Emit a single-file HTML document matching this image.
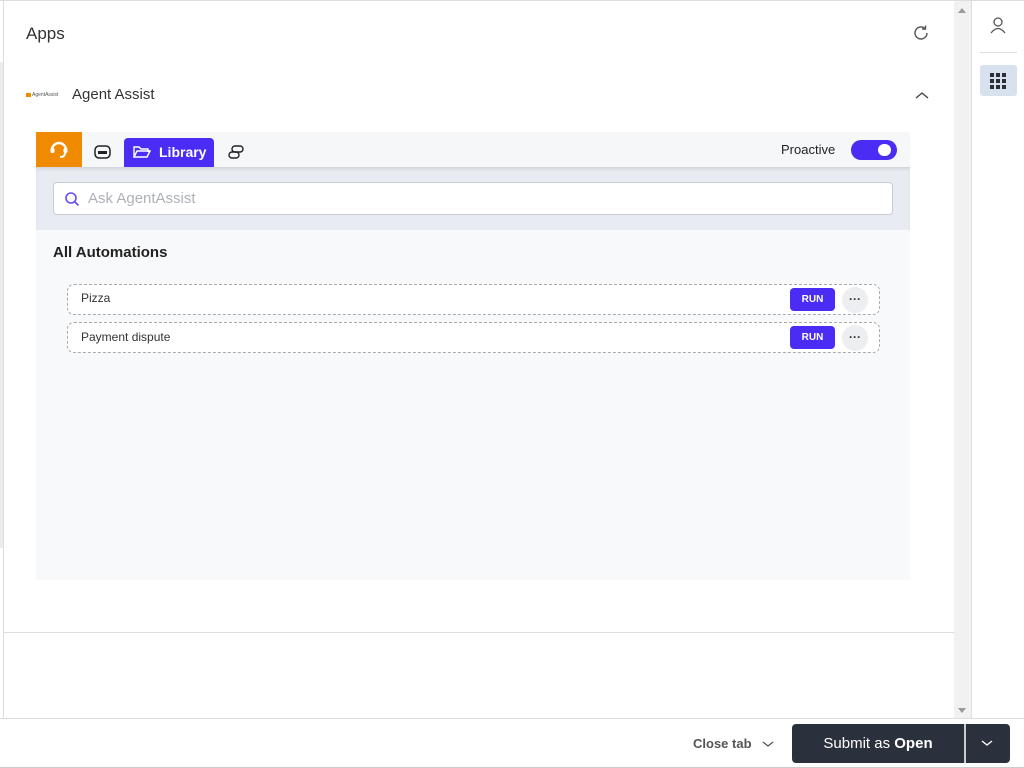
<!DOCTYPE html>
<html><head><style>
*{box-sizing:border-box;margin:0;padding:0}
body{width:1024px;height:768px;position:relative;background:#fff;font-family:"Liberation Sans",sans-serif;overflow:hidden;color:#2b2f36}
.a{position:absolute}
</style></head><body>
<div class="a" style="left:0;top:0;width:1024px;height:1px;background:#ddd"></div>
<div class="a" style="left:0;top:62px;width:3px;height:486px;background:#ececec"></div>
<div class="a" style="left:3px;top:1px;width:1px;height:717px;background:#ddd"></div>
<div class="a" style="left:26px;top:24px;font-size:17px;color:#333">Apps</div>
<svg class="a" style="left:912px;top:24px" width="18" height="18" viewBox="0 0 18 18"><path d="M15 9a6 6 0 1 1-2-4.5" fill="none" stroke="#555" stroke-width="1.4"/><path d="M13.5 1.5v3.5h-3.5" fill="none" stroke="#555" stroke-width="1.4"/></svg>
<div class="a" style="left:26px;top:93px;width:5px;height:4px;background:#f08a00"></div>
<div class="a" style="left:32px;top:92px;font-size:5px;color:#555">AgentAssist</div>
<div class="a" style="left:72px;top:86px;font-size:15px;color:#333">Agent Assist</div>
<svg class="a" style="left:914px;top:89px" width="16" height="12"><path d="M2 9l6-5 6 5" fill="none" stroke="#444" stroke-width="1.4"/></svg>
<div class="a" style="left:36px;top:132px;width:874px;height:448px;background:#f8f9fb"></div>
<div class="a" style="left:36px;top:132px;width:874px;height:35px;background:#f6f7f9"></div>
<div class="a" style="left:36px;top:132px;width:46px;height:35px;background:#f08a00"></div>
<svg class="a" style="left:48px;top:139px" width="22" height="22" viewBox="0 0 22 22"><path d="M4 11a7 7 0 0 1 14 0" fill="none" stroke="#fff" stroke-width="2.4"/><rect x="2.5" y="9" width="4" height="5" rx="1.5" fill="#fff"/><rect x="15.5" y="9" width="4" height="5" rx="1.5" fill="#fff"/><path d="M17 14q0 4-5 4" fill="none" stroke="#fff" stroke-width="2"/></svg>
<svg class="a" style="left:94px;top:145px" width="17" height="14" viewBox="0 0 17 14"><rect x="1" y="1" width="15" height="12" rx="4" fill="none" stroke="#222" stroke-width="1.5"/><rect x="4" y="6" width="9" height="3" fill="#222"/></svg>
<div class="a" style="left:124px;top:138px;width:90px;height:29px;background:#4b2cf5;border-radius:4px 4px 0 0;color:#fff;font-size:14px;font-weight:bold;padding:6px 0 0 35px">Library</div>
<svg class="a" style="left:133px;top:145px" width="18" height="14" viewBox="0 0 18 14"><path d="M1 12V2h5l2 2h7v3M1 12l3-6h13l-3 6z" fill="none" stroke="#fff" stroke-width="1.4"/></svg>
<svg class="a" style="left:228px;top:145px" width="17" height="14" viewBox="0 0 17 14"><rect x="4" y="1" width="11" height="6" rx="3" fill="none" stroke="#222" stroke-width="1.4"/><rect x="1" y="7" width="10" height="6" rx="3" fill="none" stroke="#222" stroke-width="1.4"/></svg>
<div class="a" style="left:781px;top:142px;font-size:13px;color:#222">Proactive</div>
<div class="a" style="left:851px;top:140px;width:46px;height:20px;border-radius:10px;background:#4b2cf5"></div>
<div class="a" style="left:878px;top:144px;width:13px;height:12px;border-radius:6px;background:#fff"></div>
<div class="a" style="left:36px;top:167px;width:874px;height:63px;background:#e8ecf2;box-shadow:inset 0 3px 4px -2px rgba(0,0,0,.15)"></div>
<div class="a" style="left:53px;top:182px;width:840px;height:33px;background:#fff;border:1px solid #c9ccd2;border-radius:4px"></div>
<svg class="a" style="left:64px;top:191px" width="16" height="16"><circle cx="7" cy="7" r="5" fill="none" stroke="#6a4cf5" stroke-width="1.6"/><path d="M11 11l3.5 3.5" stroke="#6a4cf5" stroke-width="1.6"/></svg>
<div class="a" style="left:88px;top:190px;font-size:15px;color:#aeb2b8">Ask AgentAssist</div>
<div class="a" style="left:53px;top:244px;font-size:15px;font-weight:bold;color:#222">All Automations</div>
<div class="a" style="left:67px;top:284px;width:813px;height:31px;background:#fff;border:1px dashed #aaa;border-radius:7px"></div>
<div class="a" style="left:81px;top:291px;font-size:12px;color:#333">Pizza</div>
<div class="a" style="left:790px;top:288px;width:45px;height:23px;background:#4b2cf5;border-radius:4px;color:#fff;font-size:10px;font-weight:bold;text-align:center;line-height:23px">RUN</div>
<div class="a" style="left:842px;top:287px;width:26px;height:26px;background:#eceef0;border-radius:13px;text-align:center;font-size:12px;line-height:24px;font-weight:bold">···</div>
<div class="a" style="left:67px;top:322px;width:813px;height:31px;background:#fff;border:1px dashed #aaa;border-radius:7px"></div>
<div class="a" style="left:81px;top:330px;font-size:12px;color:#333">Payment dispute</div>
<div class="a" style="left:790px;top:326px;width:45px;height:23px;background:#4b2cf5;border-radius:4px;color:#fff;font-size:10px;font-weight:bold;text-align:center;line-height:23px">RUN</div>
<div class="a" style="left:842px;top:325px;width:26px;height:26px;background:#eceef0;border-radius:13px;text-align:center;font-size:12px;line-height:24px;font-weight:bold">···</div>
<div class="a" style="left:3px;top:632px;width:951px;height:1px;background:#ddd"></div>
<div class="a" style="left:954px;top:1px;width:17px;height:717px;background:#f1f1f1"></div>
<div class="a" style="left:958px;top:8px;width:0;height:0;border-left:4px solid transparent;border-right:4px solid transparent;border-bottom:5px solid #999"></div>
<div class="a" style="left:958px;top:708px;width:0;height:0;border-left:4px solid transparent;border-right:4px solid transparent;border-top:5px solid #999"></div>
<div class="a" style="left:971px;top:1px;width:1px;height:717px;background:#ddd"></div>
<svg class="a" style="left:989px;top:16px" width="18" height="18"><circle cx="9" cy="6" r="4" fill="none" stroke="#555" stroke-width="1.3"/><path d="M2 17q7-9 14 0" fill="none" stroke="#555" stroke-width="1.3"/></svg>
<div class="a" style="left:980px;top:52px;width:37px;height:1px;background:#ddd"></div>
<div class="a" style="left:980px;top:65px;width:37px;height:31px;background:#d8e2ef;border-radius:3px"></div>
<svg class="a" style="left:990px;top:73px" width="16" height="16"><g fill="#2b2f36"><rect x="0" y="0" width="4" height="4"/><rect x="6" y="0" width="4" height="4"/><rect x="12" y="0" width="4" height="4"/><rect x="0" y="6" width="4" height="4"/><rect x="6" y="6" width="4" height="4"/><rect x="12" y="6" width="4" height="4"/><rect x="0" y="12" width="4" height="4"/><rect x="6" y="12" width="4" height="4"/><rect x="12" y="12" width="4" height="4"/></g></svg>
<div class="a" style="left:0;top:718px;width:1024px;height:1px;background:#ddd"></div>
<div class="a" style="left:693px;top:736px;font-size:13px;font-weight:bold;color:#555">Close tab</div>
<svg class="a" style="left:761px;top:739px" width="14" height="10"><path d="M2 3l5 4 5-4" fill="none" stroke="#555" stroke-width="1.3"/></svg>
<div class="a" style="left:792px;top:724px;width:218px;height:39px;background:#2b313c;border-radius:4px"></div>
<div class="a" style="left:964px;top:724px;width:2px;height:39px;background:#ccc"></div>
<div class="a" style="left:792px;top:735px;width:172px;text-align:center;font-size:15px;color:#fff">Submit as <b>Open</b></div>
<svg class="a" style="left:980px;top:738px" width="14" height="10"><path d="M2 3l5 4 5-4" fill="none" stroke="#fff" stroke-width="1.4"/></svg>
<div class="a" style="left:0;top:767px;width:1024px;height:1px;background:#ccc"></div>
</body></html>
